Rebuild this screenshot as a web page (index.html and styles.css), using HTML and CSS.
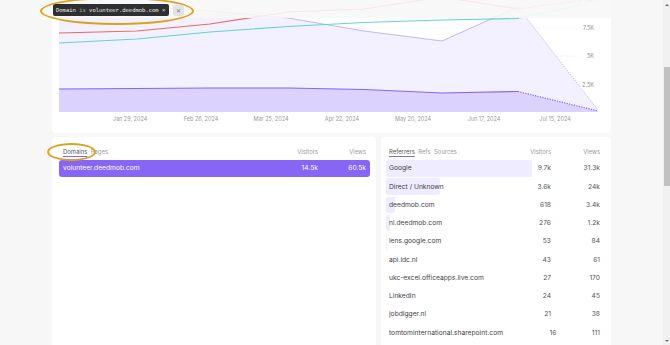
FILE: index.html
```html
<!DOCTYPE html>
<html lang="en">
<head>
    <meta charset="UTF-8">
    <meta name="viewport" content="width=device-width, initial-scale=1.0">
    <title>Analytics – volunteer.deedmob.com</title>
    <link rel="stylesheet" href="styles.css">
</head>
<body>
    <div class="app">
        <main class="page">
            <!-- sticky filter bar, sits over the scrolled chart -->
            <div class="filter-bar">
                <span class="filter-pill">Domain <span class="op">is</span> volunteer.deedmob.com ×</span>
                <span class="filter-clear">✕</span>
            </div>

            <section class="card chart-card">
                <svg class="chart" width="559" height="133" viewBox="52 0 559 133">
                    <!-- grid -->
                    <g class="grid">
                        <line x1="59" y1="0" x2="600" y2="0"/>
                        <line x1="59" y1="28" x2="600" y2="28"/>
                        <line x1="59" y1="56" x2="600" y2="56"/>
                        <line x1="59" y1="84" x2="600" y2="84"/>
                    </g>
                    <!-- views -->
                    <path class="views-fill" d="M59,112 L59,3 L137,6 L210,11 L288,18 L364,31 L442,41 L518,7 L598,110 L598,112 Z"/>
                    <path class="views-line" d="M59,3 L137,6 L210,11 L288,18 L364,31 L442,41 L518,7"/>
                    <path class="views-line dotted" d="M518,7 L598,110"/>
                    <!-- visitors -->
                    <path class="visitors-fill" d="M59,112 L59,89 L137,88.5 L210,88 L288,88 L364,89.5 L442,93 L518,91.5 L598,111 L598,112 Z"/>
                    <path class="visitors-line" d="M59,89 L137,88.5 L210,88 L288,88 L364,89.5 L442,93 L518,91.5"/>
                    <path class="visitors-line dotted" d="M518,91.5 L598,111"/>
                    <!-- compare lines -->
                    <path class="red-line" d="M59,33 L137,31 L210,24 L288,12 L364,9 L442,-3 L518,9"/>
                    <path class="red-line dotted" d="M518,9 L592,-1"/>
                    <path class="cyan-line" d="M59,43 L137,39 L210,32 L288,26.5 L364,22.5 L442,20 L518,18.5"/>
                    <path class="cyan-line dotted" d="M518,18.5 L598,1"/>
                    <!-- y axis -->
                    <g class="y-labels">
                        <rect x="581" y="-4" width="16" height="8"/>
                        <text x="594" y="2">10K</text>
                        <rect x="581" y="24" width="16" height="8"/>
                        <text x="594" y="30">7.5K</text>
                        <rect x="581" y="52" width="16" height="8"/>
                        <text x="594" y="58">5K</text>
                        <rect x="581" y="80.5" width="16" height="8"/>
                        <text x="594" y="86.5">2.5K</text>
                    </g>
                    <!-- x axis -->
                    <g class="x-labels">
                        <text x="130" y="121">Jan 29, 2024</text>
                        <text x="201" y="121">Feb 26, 2024</text>
                        <text x="271" y="121">Mar 25, 2024</text>
                        <text x="342" y="121">Apr 22, 2024</text>
                        <text x="413" y="121">May 20, 2024</text>
                        <text x="484" y="121">Jun 17, 2024</text>
                        <text x="555" y="121">Jul 15, 2024</text>
                    </g>
                </svg>
            </section>

            <div class="panels">
                <section class="card list-card domains">
                    <div class="list-head">
                        <div class="tabs">
                            <span class="tab active">Domains</span>
                            <span class="tab">Pages</span>
                        </div>
                        <span class="col visitors">Visitors</span>
                        <span class="col views">Views</span>
                    </div>
                    <div class="list-row selected">
                        <span class="name">volunteer.deedmob.com</span>
                        <span class="col visitors">14.5k</span>
                        <span class="col views">60.5k</span>
                    </div>
                </section>

                <section class="card list-card referrers">
                    <div class="list-head">
                        <div class="tabs">
                            <span class="tab active">Referrers</span>
                            <span class="tab">Refs</span>
                            <span class="tab">Sources</span>
                        </div>
                        <span class="col visitors">Visitors</span>
                        <span class="col views">Views</span>
                    </div>
                    <div class="list-row"><span class="bar" style="width:146px"></span><span class="name">Google</span><span class="col visitors">9.7k</span><span class="col views">31.3k</span></div>
                    <div class="list-row"><span class="bar" style="width:54px"></span><span class="name">Direct / Unknown</span><span class="col visitors">3.6k</span><span class="col views">24k</span></div>
                    <div class="list-row"><span class="bar" style="width:9px"></span><span class="name">deedmob.com</span><span class="col visitors">618</span><span class="col views">3.4k</span></div>
                    <div class="list-row"><span class="bar" style="width:4px"></span><span class="name">nl.deedmob.com</span><span class="col visitors">276</span><span class="col views">1.2k</span></div>
                    <div class="list-row"><span class="bar" style="width:1px"></span><span class="name">lens.google.com</span><span class="col visitors">53</span><span class="col views">84</span></div>
                    <div class="list-row"><span class="name">api.ldc.nl</span><span class="col visitors">43</span><span class="col views">61</span></div>
                    <div class="list-row"><span class="name">ukc-excel.officeapps.live.com</span><span class="col visitors">27</span><span class="col views">170</span></div>
                    <div class="list-row"><span class="name">LinkedIn</span><span class="col visitors">24</span><span class="col views">45</span></div>
                    <div class="list-row"><span class="name">jobdigger.nl</span><span class="col visitors">21</span><span class="col views">38</span></div>
                    <div class="list-row"><span class="name">tomtominternational.sharepoint.com</span><span class="col visitors">16</span><span class="col views">111</span></div>
                </section>
            </div>

            <!-- highlight marks drawn over the screenshot -->
            <div class="mark mark-filter"></div>
            <div class="mark mark-tab"></div>
        </main>

        <div class="scrollbar">
            <span class="arrow up"></span>
            <div class="track"><span class="thumb"></span></div>
            <span class="arrow down"></span>
        </div>
    </div>
</body>
</html>
```

FILE: styles.css
```css
        html, body {
            margin: 0;
            height: 100%;
        }
        body {
            background: #f7f7f7;
            font-family: Inter, "Noto Sans", sans-serif;
            color: #3f3f3f;
            overflow: hidden;
        }
        .app {
            display: flex;
            height: 345px;
        }
        .page {
            position: relative;
            flex: 1;
            padding: 0 52px;
            overflow: hidden;
        }

        /* filter bar */
        .filter-bar {
            position: absolute;
            top: 0;
            left: 0;
            right: 0;
            height: 18px;
            padding: 4px 0 0 53px;
            box-sizing: border-box;
            display: flex;
            align-items: flex-start;
            gap: 4px;
            background: rgba(247, 247, 247, 0.88);
            z-index: 2;
        }
        .filter-pill {
            height: 12px;
            line-height: 12px;
            padding: 0 4px 0 3px;
            background: #2e2f30;
            color: #eeeeee;
            border-radius: 2px;
            font-family: "DejaVu Sans Mono", "Liberation Mono", monospace;
            font-size: 5.5px;
            white-space: nowrap;
        }
        .filter-pill .op {
            color: #a8a8a8;
        }
        .filter-clear {
            width: 11px;
            height: 11px;
            margin-top: 1px;
            line-height: 11px;
            text-align: center;
            background: #e3e3e3;
            color: #7a7a7a;
            border-radius: 2px;
            font-size: 6px;
        }

        /* cards */
        .card {
            background: #ffffff;
            border-radius: 4px;
        }
        .chart-card {
            height: 133px;
            border-radius: 0 0 4px 4px;
        }
        .chart {
            display: block;
            overflow: hidden;
        }
        .grid line {
            stroke: #ececec;
            stroke-width: 0.8;
            stroke-dasharray: 1.5 1.5;
        }
        .views-fill { fill: #f3f0ff; }
        .visitors-fill { fill: #dbd3fd; }
        .views-line {
            fill: none;
            stroke: #c3b5fc;
            stroke-width: 1;
        }
        .visitors-line {
            fill: none;
            stroke: #8766f5;
            stroke-width: 1.2;
        }
        .red-line {
            fill: none;
            stroke: #ea6b5e;
            stroke-width: 1.1;
        }
        .cyan-line {
            fill: none;
            stroke: #5fd5d6;
            stroke-width: 1.1;
        }
        .dotted {
            stroke-dasharray: 1.2 1.3;
        }
        .y-labels rect { fill: #ffffff; }
        .y-labels text,
        .x-labels text {
            font-family: Inter, sans-serif;
            font-size: 5.5px;
            fill: #8c8c8c;
        }
        .y-labels text { text-anchor: end; }
        .x-labels text {
            text-anchor: middle;
            fill: #9a9a9a;
        }

        /* lists */
        .panels {
            display: grid;
            grid-template-columns: 324px 230px;
            gap: 5px;
            margin-top: 4px;
        }
        .list-card {
            height: 240px;
            padding-top: 10px;
            box-sizing: border-box;
        }
        .domains { padding: 10px 6px 0 7px; }
        .referrers { padding: 10px 5px 0 5px; }

        .list-head,
        .list-row {
            display: flex;
            align-items: center;
            padding: 0 4px;
        }
        .referrers .list-head,
        .referrers .list-row {
            padding: 0 6px 0 3px;
        }
        .list-head {
            height: 9px;
            margin-bottom: 4px;
            font-size: 5.9px;
            color: #9b9b9b;
        }
        .tabs {
            flex: 1;
            display: flex;
            gap: 3.5px;
        }
        .tab.active {
            color: #585858;
            text-decoration: underline;
            text-decoration-color: #8766f5;
            text-underline-offset: 1.5px;
            text-decoration-thickness: 0.6px;
        }
        .col {
            text-align: right;
        }
        .col.visitors { width: 60px; }
        .col.views { width: 48px; }
        .referrers .col.views { width: 49px; }

        .list-row {
            position: relative;
            height: 16.5px;
            margin-bottom: 1.75px;
            font-size: 6.7px;
            color: #3f3f3f;
        }
        .list-row .name {
            flex: 1;
            position: relative;
            white-space: nowrap;
        }
        .list-row .col {
            position: relative;
            color: #555555;
        }
        .list-row .bar {
            position: absolute;
            left: 0;
            top: 0;
            bottom: 0;
            background: #efecff;
            border-radius: 2px;
        }
        .list-row.selected {
            background: #8766f5;
            border-radius: 3px;
            color: #ffffff;
        }
        .list-row.selected .col {
            color: #ffffff;
        }

        /* highlight rings */
        .mark {
            position: absolute;
            border: 2.5px solid #d9a31f;
            border-radius: 50%;
            box-sizing: border-box;
            z-index: 3;
        }
        .mark-filter {
            left: 40px;
            top: -3px;
            width: 154px;
            height: 28px;
        }
        .mark-tab {
            left: 47px;
            top: 143px;
            width: 49px;
            height: 18px;
        }

        /* fake scrollbar */
        .scrollbar {
            width: 7px;
            display: flex;
            flex-direction: column;
            background: #f1f1f1;
        }
        .track {
            flex: 1;
            padding-top: 58px;
        }
        .thumb {
            display: block;
            width: 6px;
            margin-left: 0.5px;
            height: 119px;
            background: #c1c1c1;
        }
        .arrow {
            height: 9px;
            display: flex;
            align-items: center;
            justify-content: center;
        }
        .arrow::before {
            content: "";
            border-left: 2px solid transparent;
            border-right: 2px solid transparent;
        }
        .arrow.up::before { border-bottom: 2px solid #6e6e6e; }
        .arrow.down::before { border-top: 2px solid #6e6e6e; }
```
